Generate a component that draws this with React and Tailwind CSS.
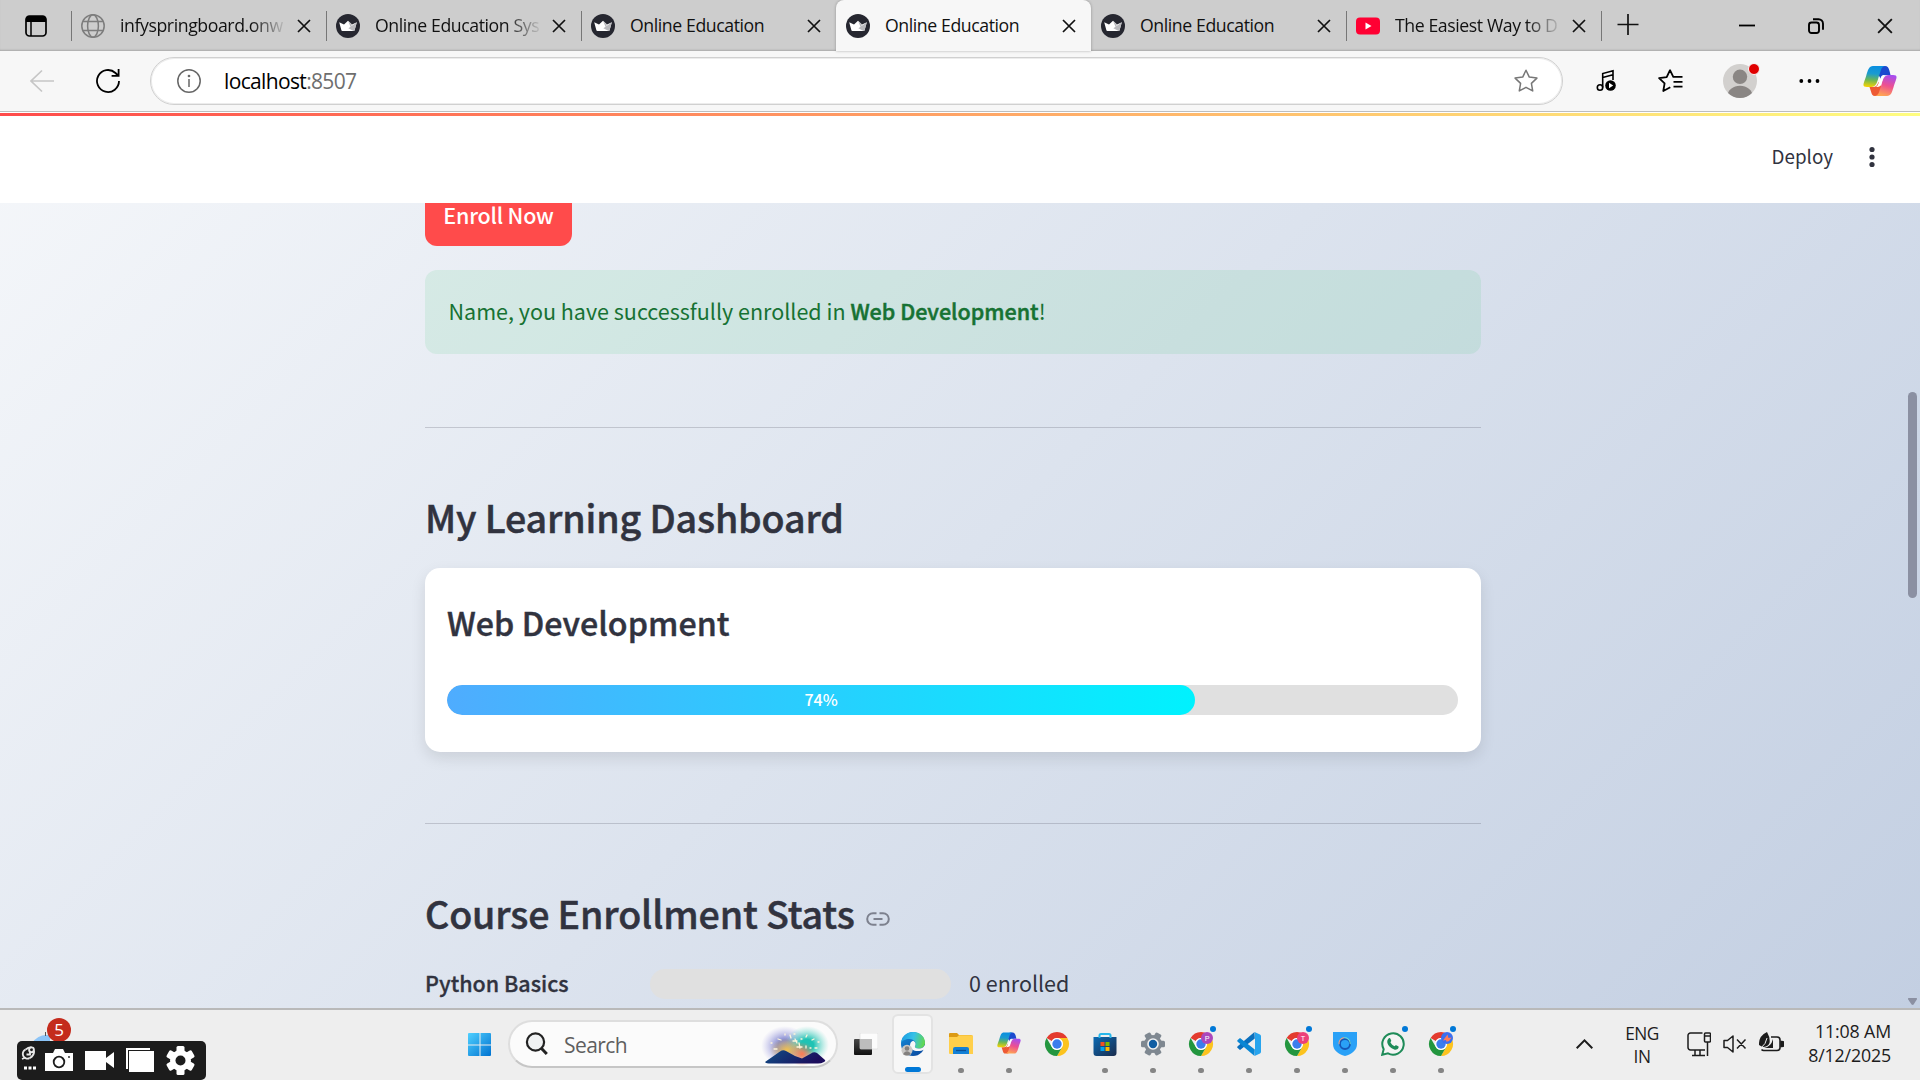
import React from "react";

const SEGOE = "font-['Open_Sans','Noto_Sans',sans-serif]";
const SOURCE = "font-['Noto_Sans_CJK_SC','Noto_Sans',sans-serif]";

function CloseX({ size = 14, w = 1.7 }) {
  return (
    <svg width={size} height={size} viewBox="0 0 14 14" fill="none" stroke="#111" strokeWidth={w}>
      <path d="M1 1l12 12M13 1L1 13" />
    </svg>
  );
}

function GlobeIcon() {
  return (
    <svg width="24" height="24" viewBox="0 0 24 24" fill="none" stroke="#7d7d7d" strokeWidth="1.5">
      <circle cx="12" cy="12" r="11.2" />
      <ellipse cx="12" cy="12" rx="5.4" ry="11.2" />
      <path d="M2 7.5h20M2 16.5h20" />
    </svg>
  );
}

function CrownIcon() {
  return (
    <svg width="24" height="24" viewBox="0 0 24 24">
      <circle cx="12" cy="12" r="12" fill="#262730" />
      <path d="M3.2 8.2L8 10.6L12 6.8l4 3.8l4.8-2.4L18.6 16.2Q18.4 17 17.6 17H6.4q-.8 0-1-.8z" fill="#fff" />
      <path d="M12 6.8l4 3.8l-1.3 2.6zM20.8 8.2L18.6 16.2Q18.4 17 17.6 17L12.4 14.2z" fill="#b9b9bd" />
    </svg>
  );
}

function YouTubeIcon() {
  return (
    <svg width="24" height="24" viewBox="0 0 24 24">
      <rect y="3.500" width="24" height="17" rx="4" fill="#ff0033" />
      <path d="M9.500 8.500v7l6-3.500z" fill="#fff" />
    </svg>
  );
}

function Copilot({ width, height, id }) {
  return (
    <svg width={width} height={height} viewBox="0 0 34 30">
      <defs>
        <linearGradient id={id + "a"} x1="0.3" y1="0" x2="0.2" y2="1">
          <stop offset="0" stopColor="#0a8fe0" />
          <stop offset="0.35" stopColor="#1a9bd0" />
          <stop offset="0.65" stopColor="#6bb756" />
          <stop offset="1" stopColor="#fbd400" />
        </linearGradient>
        <linearGradient id={id + "b"} x1="0.7" y1="0" x2="0.4" y2="1">
          <stop offset="0" stopColor="#a64df0" />
          <stop offset="0.5" stopColor="#ee5090" />
          <stop offset="1" stopColor="#ffa552" />
        </linearGradient>
      </defs>
      <path d="M18 0h4c2.600 0 3.800 2 4.400 4.500L27.500 9H24c-3 0-4.500 2-5.500 5l-3-5z" fill="#1b49cf" />
      <path d="M16 30h-4c-2.600 0-3.400-2-4-4.500L6.500 21H10c3 0 4.500-2 5.500-5l3 5z" fill="#ee5a34" />
      <path d="M10 0C6 0 5 3.500 3 10.500C1 17-2 21 4 21h4.500c4 0 5.300-3.500 7-9.500l2.600-8C18.900 1.300 20.500 0 22.500 0z" fill={"url(#" + id + "a)"} />
      <path d="M24 30c4 0 5-3.500 7-10.500C33 13 36 9 30 9h-4.500c-4 0-5.300 3.500-7 9.500l-2.600 8C15.100 28.700 13.500 30 11.500 30z" fill={"url(#" + id + "b)"} />
      <path d="M18.200 10.500C19 9.300 20 9 22.400 9c-2 1.200-2.600 4-4.200 9c-.8 2.200-1.500 3-5.200 3c1.800-1 2.400-3.200 5.200-10.500z" fill="#fff" />
    </svg>
  );
}

const tabs = [
  { title: "infyspringboard.onw", icon: "globe", fade: true },
  { title: "Online Education Sys", icon: "crown", fade: true },
  { title: "Online Education", icon: "crown" },
  { title: "Online Education", icon: "crown", active: true },
  { title: "Online Education", icon: "crown", afterActive: true },
  { title: "The Easiest Way to D", icon: "youtube", fade: true },
];

function Tab({ tab }) {
  const Icon = tab.icon === "globe" ? GlobeIcon : tab.icon === "crown" ? CrownIcon : YouTubeIcon;
  return (
    <div
      className={
        "relative flex h-[51px] w-[255px] shrink-0 items-center pl-[10px] " +
        (tab.active ? "rounded-t-[8px] bg-[#f7f7f7] shadow-[0_0_3px_rgba(0,0,0,0.3)]" : "")
      }
    >
      {!tab.active && !tab.afterActive && <span className="absolute left-0 top-[11px] h-[30px] w-px bg-[#777]" />}
      <Icon />
      <span
        className={
          "ml-[15px] w-[164px] whitespace-nowrap pb-px text-[17.7px] leading-[24px] tracking-[-0.42px] text-[#111] " +
          (tab.fade ? "[mask-image:linear-gradient(to_right,#000_80%,transparent_102%)]" : "")
        }
      >
        {tab.title}
      </span>
      <span className="ml-[13px]">
        <CloseX />
      </span>
    </div>
  );
}

function TabStrip() {
  return (
    <div className="flex h-[51px] bg-[#cdcdcd] shadow-[inset_0_-2px_2px_-1px_rgba(0,0,0,0.18)]">
      <div className="flex w-[71px] items-center pl-[25px]">
        <svg width="22" height="22" viewBox="0 0 22 22" fill="none">
          <rect x="1" y="1" width="20" height="20" rx="3.500" stroke="#000" strokeWidth="1.700" />
          <path d="M1 4a3 3 0 0 1 3-3h14a3 3 0 0 1 3 3v3H1z" fill="#000" />
          <path d="M6 6v15" stroke="#000" strokeWidth="1.500" />
        </svg>
      </div>
      {tabs.map((t, i) => (
        <Tab key={i} tab={t} />
      ))}
      <div className="flex flex-1 items-center pr-[27px]">
        <span className="h-[30px] w-px bg-[#777]" />
        <svg className="mb-[2px] ml-[15px]" width="22" height="22" viewBox="0 0 22 22" stroke="#111" strokeWidth="1.700">
          <path d="M11 0v21M0.500 10.500h21" />
        </svg>
        <div className="ml-auto flex items-center">
          <svg width="16" height="16" viewBox="0 0 16 16" stroke="#000" strokeWidth="1.800">
            <path d="M0 7.500h16" />
          </svg>
          <svg className="ml-[53px]" width="16" height="16" viewBox="0 0 16 16" fill="none" stroke="#000" strokeWidth="1.900">
            <rect x="1" y="4.500" width="10" height="10.500" rx="2.500" />
            <path d="M5 1.200h5.500a4.500 4.500 0 0 1 4.500 4.500v6" />
          </svg>
          <span className="ml-[53px]">
            <CloseX size={16} w={1.6} />
          </span>
        </div>
      </div>
    </div>
  );
}

function Toolbar() {
  return (
    <div className="flex h-[61px] items-center border-b border-[#bdbdbd] bg-[#f7f7f7] pl-[30px] pr-[23px]">
      <svg width="24" height="24" viewBox="0 0 24 24" fill="none" stroke="#c6c6c6" strokeWidth="1.700">
        <path d="M24 12H1M12 1.500L1 12l11 10.500" />
      </svg>
      <svg className="ml-[42px]" width="24" height="24" viewBox="0 0 24 24" fill="none" stroke="#000" strokeWidth="1.800">
        <path d="M23 12A11 11 0 1 1 19.500 4L22 6.500M22.600 0v6.800h-7" />
      </svg>
      <div className="ml-[30px] flex h-12 w-[1413px] items-center rounded-full border border-[#d0d0d0] bg-white pl-[26px] pr-[24px] shadow-[inset_0_0_0_1px_#ececec]">
        <svg width="24" height="24" viewBox="0 0 24 24" fill="none" stroke="#666" strokeWidth="1.500">
          <circle cx="12" cy="12" r="11.200" />
          <path d="M12 10v8" />
          <circle cx="12" cy="7" r="0.600" fill="#666" />
        </svg>
        <span className="ml-[23px] text-[21px] leading-6 tracking-[-0.65px] text-black">
          localhost<span className="text-[#6e6e6e]">:8507</span>
        </span>
        <svg className="ml-auto" width="24" height="24" viewBox="0 0 24 24" fill="none" stroke="#777" strokeWidth="1.500" strokeLinejoin="round">
          <path d="M12 1.200l3.300 6.900l7.600 1l-5.500 5.300l1.300 7.500L12 18.300l-6.700 3.600l1.300-7.500L1.100 9.100l7.600-1z" />
        </svg>
      </div>
      <svg className="ml-[33px]" width="22" height="24" viewBox="0 0 22 24" fill="none" stroke="#000" strokeWidth="1.600">
        <circle cx="4" cy="18.500" r="2.700" />
        <path d="M6.700 18.500V4.500L17 1.800V11M6.700 8.600L17 5.700" />
        <circle cx="14.500" cy="16.500" r="5.300" fill="#000" stroke="none" />
        <path d="M13 13.800v5.400l4.200-2.700z" fill="#fff" stroke="none" />
      </svg>
      <svg className="ml-[40px]" width="25" height="24" viewBox="0 0 25 24" fill="none" stroke="#000" strokeWidth="1.800" strokeLinejoin="round">
        <path d="M24.500 7.800H15.300L12 1.200L8.700 8.100l-7.600 1l5.500 5.300l-1.300 7.600l7-3.700M15.500 12.800h9M15.500 17.600h9" />
      </svg>
      <div className="relative ml-[40px] size-[34px]">
        <svg width="34" height="34" viewBox="0 0 34 34">
          <clipPath id="avatar"><circle cx="17" cy="17" r="17" /></clipPath>
          <circle cx="17" cy="17" r="17" fill="#d2d0ce" />
          <circle cx="17" cy="12.800" r="7.200" fill="#8a8684" />
          <ellipse cx="17" cy="32" rx="12.500" ry="10.200" fill="#8a8684" clipPath="url(#avatar)" />
        </svg>
        <span className="absolute -right-[3px] -top-px size-3 rounded-full border border-[#f7f7f7] bg-[#e00000]" />
      </div>
      <svg className="ml-[42px]" width="22" height="6" viewBox="0 0 22 6" fill="#000">
        <circle cx="2.300" cy="3" r="1.900" />
        <circle cx="10.500" cy="3" r="1.900" />
        <circle cx="18.500" cy="3" r="1.900" />
      </svg>
      <span className="ml-auto">
        <Copilot width={34} height={30} id="cpt" />
      </span>
    </div>
  );
}

function Page() {
  return (
    <div className={"flex h-[896px] flex-col bg-[linear-gradient(135deg,#f5f7fa,#c3cfe2)] text-[#31333f] " + SOURCE}>
      <header className="h-[91px] shrink-0 bg-white pt-px">
        <div className="h-[3px] bg-[linear-gradient(90deg,#ff4b4b,#fffd80)]" />
        <div className="flex h-[82px] items-center justify-end pr-[44px]">
          <span className="pb-0.5 text-[18.8px] leading-6">Deploy</span>
          <svg className="ml-[35px]" width="8" height="22" viewBox="0 0 8 22" fill="#31333f">
            <circle cx="4" cy="3.500" r="2.600" />
            <circle cx="4" cy="11" r="2.600" />
            <circle cx="4" cy="18.500" r="2.600" />
          </svg>
        </div>
      </header>
      <div className="flex min-h-0 flex-1 overflow-hidden">
        <main className="ml-[425px] w-[1056px]">
          <button className="-mt-[17px] flex h-[60px] w-[147px] items-center justify-center rounded-xl bg-[#ff4b4b] pb-[3px] text-[21.5px] font-medium leading-[24px] tracking-[-0.2px] text-white">
            Enroll Now
          </button>
          <div className="mt-6 flex h-[84px] items-center rounded-xl bg-[rgba(33,195,84,0.1)] pl-[23.5px] pr-6 pb-px text-[21.5px] text-[#177233]">
            <p>
              Name, you have successfully enrolled in{" "}
              <b className="font-medium [-webkit-text-stroke:0.5px_#177233]">Web Development</b>!
            </p>
          </div>
          <hr className="mt-[73px] border-t border-[#31333f]/20" />
          <h2 className="mt-[64px] text-[37.6px] font-medium leading-[50px] tracking-[-0.14px] [-webkit-text-stroke:0.5px_#31333f]">
            My Learning Dashboard
          </h2>
          <section className="mt-[26px] h-[184px] rounded-[15px] bg-white px-[22px] pt-8 shadow-[0_6px_15px_rgba(0,0,0,0.1)]">
            <h3 className="text-[32.2px] font-medium leading-[44px] tracking-[0.05px] [-webkit-text-stroke:0.45px_#31333f]">
              Web Development
            </h3>
            <div className="mt-[41px] h-[30px] w-[1011px] overflow-hidden rounded-full bg-[#e0e0e0]">
              <div className="flex h-full w-[74%] items-center justify-center rounded-full bg-[linear-gradient(90deg,#4facfe,#00f2fe)] pb-0.5 text-base font-medium text-white">
                74%
              </div>
            </div>
          </section>
          <hr className="mt-[71px] border-t border-[#31333f]/20" />
          <h2 className="mt-16 flex items-center text-[37.6px] font-medium leading-[50px] tracking-[-0.14px] [-webkit-text-stroke:0.5px_#31333f]">
            Course Enrollment Stats
            <svg className="ml-[11px] mt-3" width="24" height="14" viewBox="0 0 24 14" fill="none" stroke="#7d818e" strokeWidth="2">
              <path d="M10.500 1.200H7a5.800 5.800 0 0 0 0 11.600h3.500M13.500 1.200H17a5.800 5.800 0 0 1 0 11.600h-3.500M7.500 7h9" />
            </svg>
          </h2>
          <div className="mt-[31px] flex h-[30px] items-center text-[21.5px] leading-[30px]">
            <span className="w-[225px] pb-0.5 font-medium [-webkit-text-stroke:0.3px_#31333f]">Python Basics</span>
            <span className="h-[30px] w-[301px] rounded-[15px] bg-[#e0e0e0]" />
            <span className="ml-[18px] pb-0.5">0 enrolled</span>
          </div>
        </main>
        <div className="ml-auto flex w-3 flex-col items-start">
          <span className="mt-[189px] h-[206px] w-[9px] rounded-full bg-[#8b90a2]" />
          <svg className="mb-[3px] mt-auto" width="9" height="7" viewBox="0 0 9 7" fill="#8b90a2">
            <path d="M0.500 0h8q.8.500.3 1.500L5.600 6.500q-1 .9-2 0L.2 1.500Q-.3.500.5 0z" />
          </svg>
        </div>
      </div>
    </div>
  );
}

function Recorder() {
  return (
    <div className="absolute left-[17px] top-[31px] flex h-[39px] w-[189px] items-center rounded-[5px] bg-[#1c1c1c]">
      <svg width="189" height="39" viewBox="0 0 189 39">
        <g fill="none" stroke="#e8e8e8" strokeWidth="1.900">
          <path d="M12.500 17.200A4.700 4.700 0 1 1 8.500 8.600" />
          <circle cx="14.500" cy="8.800" r="2.400" />
          <path d="M8.500 8.600Q11 6.200 14.500 6.200M17 9.500q.6 5-4.500 7.700M13 10.500v3H9.500M5 18l3.500-1.500" />
        </g>
        <path d="M7 25.500h3v3H7zM11.500 25.500h3v3h-3zM16 25.500h3v3h-3z" fill="#fff" />
        <path d="M28 12h8l2-4h8l2 4h8v18H28z" fill="#fff" />
        <circle cx="42" cy="21" r="5.300" fill="none" stroke="#1c1c1c" strokeWidth="1.800" />
        <circle cx="52" cy="16" r="0.900" fill="#1c1c1c" />
        <path d="M68 10h21v7l8-6v16l-8-6v8H68z" fill="#fff" />
        <path d="M109 7h24v2h-22v19h-2z" fill="#fff" />
        <path d="M112 10h25v21h-25z" fill="#fff" />
        <g transform="translate(163.500 19.500)">
          <g fill="#fff">
            <rect x="-4" y="-14.500" width="8" height="29" rx="1.500" />
            <rect x="-4" y="-14.500" width="8" height="29" rx="1.500" transform="rotate(60)" />
            <rect x="-4" y="-14.500" width="8" height="29" rx="1.500" transform="rotate(120)" />
            <circle r="10.500" />
          </g>
          <circle r="5" fill="#1c1c1c" />
        </g>
      </svg>
    </div>
  );
}

function StartIcon() {
  return (
    <svg width="24" height="24" viewBox="0 0 24 24">
      <defs>
        <linearGradient id="win" x1="0" y1="0" x2="1" y2="1">
          <stop offset="0" stopColor="#4fd0ff" />
          <stop offset="1" stopColor="#0072d0" />
        </linearGradient>
      </defs>
      <path d="M1 0h10.500v11.500H0V1a1 1 0 0 1 1-1zM12.500 0H22a1 1 0 0 1 1 1v10.500H12.500zM0 12.500h11.500V23H1a1 1 0 0 1-1-1zM12.500 12.500H23V22a1 1 0 0 1-1 1h-9.500z" fill="url(#win)" />
    </svg>
  );
}

function FireworksArt() {
  return (
    <svg width="68" height="40" viewBox="0 0 68 40">
      <defs>
        <radialGradient id="fw1"><stop offset="0.300" stopColor="#7f86cf" /><stop offset="1" stopColor="#b9b4ea" stopOpacity="0" /></radialGradient>
        <radialGradient id="fw2"><stop offset="0.300" stopColor="#1fc3b4" /><stop offset="1" stopColor="#7fdccf" stopOpacity="0" /></radialGradient>
        <radialGradient id="fw3"><stop offset="0" stopColor="#f2c14e" /><stop offset="1" stopColor="#f2c14e" stopOpacity="0" /></radialGradient>
        <radialGradient id="fw4"><stop offset="0" stopColor="#ff7a52" /><stop offset="1" stopColor="#ff7a52" stopOpacity="0" /></radialGradient>
        <linearGradient id="mt" x1="0" y1="0" x2="1" y2="0.300"><stop offset="0" stopColor="#0f4f86" /><stop offset="1" stopColor="#1c0d5c" /></linearGradient>
      </defs>
      <ellipse cx="24" cy="20" rx="24" ry="20" fill="url(#fw1)" />
      <ellipse cx="46" cy="19" rx="22" ry="19" fill="url(#fw2)" />
      <ellipse cx="26" cy="24" rx="17" ry="12" fill="url(#fw3)" />
      <ellipse cx="41" cy="28" rx="13" ry="12" fill="url(#fw4)" />
      <g stroke="#fff6dc" strokeWidth="1.300" strokeLinecap="round">
        <path d="M10 17h1M13 23h3M17 13l3 1M29 9l1 3M24 8v1M46 9l-1 2M53 13l-2 1M58 16h-1M54 22h2M34 13l2 4M38 17l1 5M45 20v2M50 22h-1M33 8h1M40 13h1M36 21h5M32 15h4" />
      </g>
      <path d="M4 36L19 25.500q3-2 6-.5l9 5l7 2.500l9-5q3-2 6-.5l8 7q1 1-1 2q-3 1.500-6 1.500H10q-5 0-6-1.500z" fill="url(#mt)" />
    </svg>
  );
}

function EdgeIcon() {
  return (
    <svg width="24" height="24" viewBox="0 0 24 24">
      <defs>
        <linearGradient id="eg1" x1="0" y1="0.300" x2="1" y2="0.500"><stop offset="0" stopColor="#1b9de2" /><stop offset="0.500" stopColor="#35c1e8" /><stop offset="1" stopColor="#62d84e" /></linearGradient>
        <linearGradient id="eg2" x1="0" y1="0" x2="0.600" y2="1"><stop offset="0" stopColor="#1590df" /><stop offset="1" stopColor="#0b4fa4" /></linearGradient>
      </defs>
      <circle cx="12" cy="12" r="12" fill="url(#eg2)" />
      <path d="M0 11C1 4 6 0 12 0c7 0 12 5 12 10.500c0 4-3 6-6.500 6c-3 0-4-1.200-3.500-2.200c2-3-.5-7.300-5.500-7.300C4 7 1 9 0 11z" fill="url(#eg1)" />
      <path d="M9 14c0-3 1-4.600 3.200-5.200C14.500 10 15.300 12 14 14.300c-.6 1 .6 2.200 3.500 2.200c2 0 3.600-.6 4.900-1.600l1.600-2v4.500l-1 .3c-2 1-5 1.600-8 1.200c-3.500-.5-6-2.400-6-4.900z" fill="#f7f7f7" />
      <circle cx="6" cy="18.300" r="5.500" fill="#c9c7c5" />
      <circle cx="6" cy="16.500" r="2.300" fill="#83807e" />
      <path d="M2.500 21.300q3.500-4.200 7 0v1.200q-3.500 2.200-7 0z" fill="#83807e" />
    </svg>
  );
}

function FolderIcon() {
  return (
    <svg width="24" height="24" viewBox="0 0 24 24">
      <path d="M0 2a1 1 0 0 1 1-1h7l2 2h12a1.500 1.500 0 0 1 1.500 1.500V12H0z" fill="#dc9a14" />
      <path d="M0 5h8l2-1.800h13a1 1 0 0 1 1 1V22H1a1 1 0 0 1-1-1z" fill="#ffcf4b" />
      <path d="M4 22v-5a2 2 0 0 1 2-2h12a2 2 0 0 1 2 2v5z" fill="#1380d6" />
      <path d="M7 18.500h10" stroke="#0b4f94" strokeWidth="1.300" />
    </svg>
  );
}

function ChromeIcon({ badge, color }) {
  return (
    <svg width="24" height="24" viewBox="0 0 24 24" className="overflow-visible">
      <path d="M1.600 6A12 12 0 0 1 22.400 6H12a6 6 0 0 0-5.200 3z" fill="#e33b2e" />
      <path d="M22.400 6A12 12 0 0 1 12 24l5.200-9A6 6 0 0 0 12 6z" fill="#fcc31e" />
      <path d="M1.600 6l5.200 9a6 6 0 0 0 10.400 0L12 24A12 12 0 0 1 1.600 6z" fill="#23963f" />
      <circle cx="12" cy="12" r="6" fill="#fff" />
      <circle cx="12" cy="12" r="4.700" fill="#3b7ded" />
      {badge && <circle cx="18" cy="6" r="6" fill={color} />}
      {badge === "bird" ? (
        <path d="M14 8.500l4.500-6l1 3.500l3.200-.5l-2.700 3.500l-2.500.8l-.5-1.800z" fill="#ff7a59" />
      ) : (
        badge && (
          <text x="18" y="8.600" fontSize="7.500" textAnchor="middle" fill="#fff" fontFamily="Roboto">{badge}</text>
        )
      )}
    </svg>
  );
}

function StoreIcon() {
  return (
    <svg width="24" height="24" viewBox="0 0 24 24">
      <defs>
        <linearGradient id="st" x1="0" y1="0" x2="1" y2="1"><stop offset="0" stopColor="#0a6ab4" /><stop offset="1" stopColor="#1b2c4c" /></linearGradient>
      </defs>
      <path d="M.5 5h23v16a3 3 0 0 1-3 3h-17a3 3 0 0 1-3-3z" fill="url(#st)" />
      <path d="M6.500 6V3.500A1.500 1.500 0 0 1 8 2h8a1.500 1.500 0 0 1 1.500 1.500V6" fill="none" stroke="#25b6ea" strokeWidth="2" />
      <path d="M7.500 10h4v4h-4z" fill="#f25022" />
      <path d="M12.500 10h4v4h-4z" fill="#7fba00" />
      <path d="M7.500 15h4v4h-4z" fill="#00a4ef" />
      <path d="M12.500 15h4v4h-4z" fill="#ffb900" />
    </svg>
  );
}

function SettingsIcon() {
  return (
    <svg width="24" height="24" viewBox="-12 -12 24 24">
      <g fill="#7f8891">
        <rect x="-3.300" y="-12" width="6.600" height="24" rx="1.500" transform="rotate(30)" />
        <rect x="-3.300" y="-12" width="6.600" height="24" rx="1.500" transform="rotate(90)" />
        <rect x="-3.300" y="-12" width="6.600" height="24" rx="1.500" transform="rotate(150)" />
        <circle r="9" />
      </g>
      <circle r="5.800" fill="#f2f2f2" />
      <circle r="4.200" fill="#115ea3" />
    </svg>
  );
}

function VSCodeIcon() {
  return (
    <svg width="24" height="24" viewBox="0 0 24 24">
      <path d="M17.800 6.500L3 18l-2.300-2q-1-.8 0-1.700L17.500 0z" fill="#0a6fbd" />
      <path d="M17.800 17.500L3 6L.7 8q-1 .8 0 1.700L17.500 24z" fill="#0a86d4" />
      <path d="M17.500 0L23 2.600q1 .5 1 1.600v15.600q0 1.100-1 1.600L17.500 24q.5-.3.500-1.200V1.200Q18 .3 17.500 0z" fill="#27a4ee" />
    </svg>
  );
}

function ShieldIcon() {
  return (
    <svg width="24" height="24" viewBox="0 0 24 24">
      <path d="M0 0h24v12c0 6-5 10-12 12C5 22 0 18 0 12z" fill="#2aa1f7" />
      <circle cx="12" cy="12" r="5" fill="none" stroke="#1557b8" strokeWidth="1.800" />
      <circle cx="11.600" cy="11.300" r="5.600" fill="none" stroke="#f5a07a" strokeWidth="1" strokeDasharray="9 26.200" transform="rotate(170 11.600 11.300)" />
      <circle cx="11.600" cy="11.300" r="5.600" fill="none" stroke="#6fe0d0" strokeWidth="1" strokeDasharray="10 25.200" transform="rotate(265 11.600 11.300)" />
    </svg>
  );
}

function WhatsAppIcon() {
  return (
    <svg width="24" height="24" viewBox="0 0 24 24">
      <path d="M1.200 22.800l1.500-5.600A10.700 10.700 0 1 1 7 21.400z" fill="#f4f4f4" stroke="#1e8b58" strokeWidth="2" />
      <path d="M7.600 6.500c.8-.7 1.500-.4 1.800.3l.8 1.800c.2.500-.2 1-.8 1.700c1 2 2.300 3.100 4.200 4c.6-.8 1-1.300 1.600-1l2 1c.6.300.5 1 .2 1.700c-.7 1.500-2.500 2-4.200 1.500c-3.700-1.200-6-3.700-6.800-6.400c-.4-1.800 0-3.500 1.200-4.600z" fill="#1e8b58" />
    </svg>
  );
}

const apps = [
  { icon: <FolderIcon />, dot: true },
  { icon: <Copilot width={24} height={22} id="cpb" />, dot: true },
  { icon: <ChromeIcon /> },
  { icon: <StoreIcon />, dot: true },
  { icon: <SettingsIcon />, dot: true },
  { icon: <ChromeIcon badge="P" color="#ab47bc" />, dot: true, note: true },
  { icon: <VSCodeIcon />, dot: true },
  { icon: <ChromeIcon badge="T" color="#ec407a" />, dot: true, note: true },
  { icon: <ShieldIcon />, dot: true },
  { icon: <WhatsAppIcon />, dot: true, note: true },
  { icon: <ChromeIcon badge="bird" color="#3b6ff0" />, dot: true, note: true },
];

function Taskbar() {
  return (
    <div className="relative flex h-[72px] border-t-2 border-[#b9b9b9] bg-[#eeeeee] pl-[468px] pr-[29px] text-[#1c1c1c]">
      <svg className="absolute left-8 top-[22px]" width="40" height="20" viewBox="0 0 40 20">
        <path d="M0 11Q6 3 14 3h4v12H0z" fill="#8cc4f7" />
        <path d="M13.500 0v4" stroke="#555" strokeWidth="1" />
      </svg>
      <span className="absolute left-[47px] top-2 flex size-6 items-center justify-center rounded-full bg-[#c42b1c] pb-px text-[17px] leading-none text-white">
        5
      </span>
      <Recorder />
      <span className="mt-[23px]">
        <StartIcon />
      </span>
      <div className="ml-4 mt-[10px] flex h-12 w-[330px] items-center rounded-full border-2 border-b-[#c6c6c6] border-[#dedede] bg-[#fbfbfb] pl-[15px]">
        <svg width="24" height="24" viewBox="0 0 24 24" fill="none" stroke="#222" strokeWidth="2.200">
          <circle cx="10.500" cy="10" r="8.600" fill="#f0f2f3" />
          <path d="M16.300 16.300l5.500 5.700" strokeWidth="3" />
        </svg>
        <span className="ml-[15px] pt-px text-[21px] leading-6 tracking-[-0.55px] text-[#5f5f5f]">Search</span>
        <span className="ml-auto mr-[7px] pt-1">
          <FireworksArt />
        </span>
      </div>
      <svg className="ml-4 mt-[23px]" width="24" height="22" viewBox="0 0 24 22">
        <defs>
          <linearGradient id="tv" x1="0" y1="0" x2="0" y2="1"><stop offset="0" stopColor="#484848" /><stop offset="1" stopColor="#111" /></linearGradient>
        </defs>
        <rect y="6" width="18" height="16" rx="1" fill="url(#tv)" />
        <rect x="6" width="18" height="16" rx="1" fill="#fff" fillOpacity="0.800" stroke="#dcdcdc" strokeWidth="0.700" />
        <path d="M6 6h12v10H6z" fill="#bdbdbd" />
      </svg>
      <div className="relative ml-[14px] mt-1 flex h-[60px] w-[41px] justify-center rounded-md border-2 border-[#e3e3e3] bg-[#f7f7f7] pt-4">
        <EdgeIcon />
        <span className="absolute bottom-0 h-[5px] w-4 rounded-full bg-[#0078d7]" />
      </div>
      <div className="ml-[4px] flex">
        {apps.map((a, i) => (
          <div key={i} className="relative flex w-12 justify-center pt-[22px]">
            {a.icon}
            {a.dot && <span className="absolute top-[58px] h-[5px] w-1.5 rounded-full bg-[#858585]" />}
            {a.note && <span className="absolute left-[33px] top-4 size-1.5 rounded-full bg-[#0078d7]" />}
          </div>
        ))}
      </div>
      <div className="ml-auto flex">
        <svg className="mt-[29px]" width="17" height="10" viewBox="0 0 17 10" fill="none" stroke="#1c1c1c" strokeWidth="2">
          <path d="M.7 9.200L8.500 1.400l7.800 7.800" />
        </svg>
        <div className="ml-[31px] mt-3 w-[36px] text-center text-[17.3px] leading-[23px] tracking-[-0.5px]">
          ENG
          <br />
          IN
        </div>
        <svg className="ml-[27px] mt-[22px]" width="24" height="25" viewBox="0 0 24 25" fill="none" stroke="#1c1c1c" strokeWidth="1.500">
          <path d="M15.500 1H3.500A2.500 2.500 0 0 0 1 3.500v12A2.500 2.500 0 0 0 3.500 18H18M8 18.500v4.500M13 18.500v4.500M5 23.500h13M20.500 10v14" />
          <rect x="17.500" y="1" width="6" height="9" rx="1" />
          <path d="M17.500 4h6" />
        </svg>
        <svg className="ml-3 mt-[25px]" width="24" height="18" viewBox="0 0 24 18" fill="none" stroke="#1c1c1c" strokeWidth="1.500" strokeLinejoin="round">
          <path d="M10 1v16l-5.500-4.500H1v-7h3.500zM14 4.500l8.500 9M22.500 4.500l-8.500 9" />
        </svg>
        <svg className="ml-3 mt-[22px]" width="25" height="20" viewBox="0 0 25 20" fill="none" stroke="#1c1c1c" strokeWidth="1.600">
          <path d="M12 5h6a3 3 0 0 1 3 3v7.500a3 3 0 0 1-3 3H5a3 3 0 0 1-2.500-1" />
          <path d="M22 9.500h1a1.500 1.500 0 0 1 0 5h-1z" fill="#1c1c1c" />
          <path d="M8 0q3.500 6 2.500 11q-1.500 4-7 4L0 13Q-.5 4 8 0zM5 16Q12 15 14 7v9z" fill="#1c1c1c" stroke="none" />
          <path d="M2 16Q7 12 8 6" stroke="#eee" strokeWidth="1" />
        </svg>
        <div className="ml-[15px] mt-[9px] w-[92px] whitespace-nowrap text-right text-[17.8px] leading-6 tracking-[-0.15px]">
          11:08 AM
          <br />
          8/12/2025
        </div>
      </div>
    </div>
  );
}

export default function App() {
  return (
    <div className={"flex h-[1080px] w-[1920px] flex-col overflow-hidden bg-white " + SEGOE}>
      <TabStrip />
      <Toolbar />
      <Page />
      <Taskbar />
    </div>
  );
}
